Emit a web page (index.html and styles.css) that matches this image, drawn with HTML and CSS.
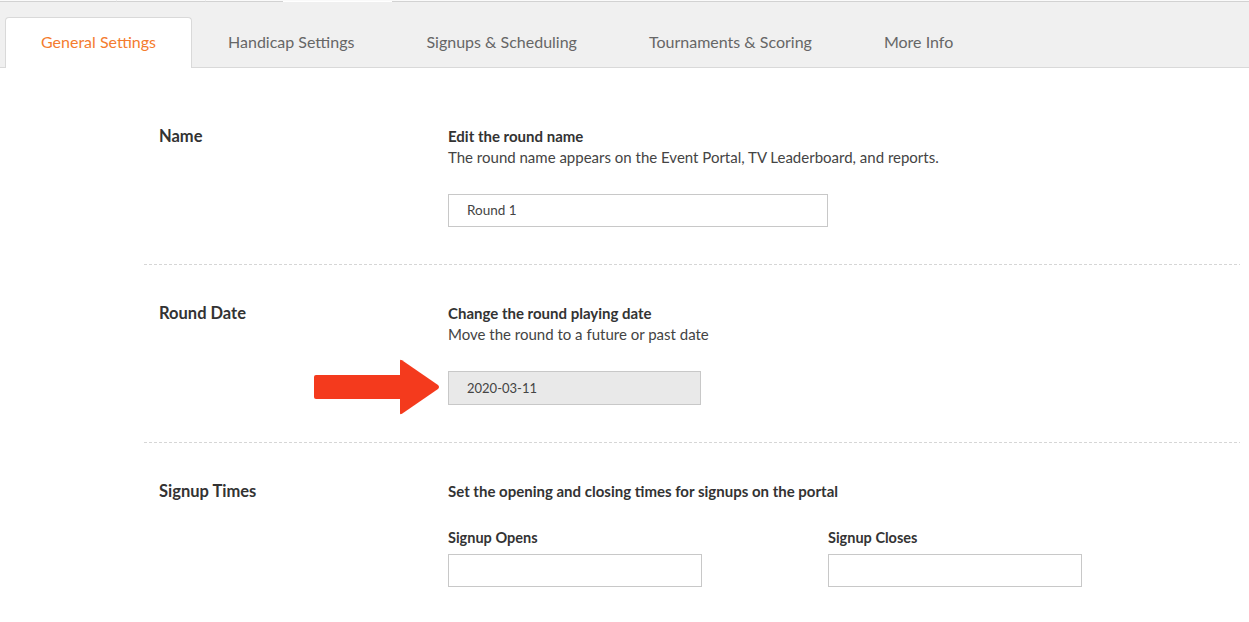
FILE: index.html
```html
<!DOCTYPE html>
<html lang="en">
<head>
<meta charset="utf-8">
<title>Round Settings</title>
<link rel="stylesheet" href="styles.css">
</head>
<body>
<div class="strip">
  <span class="seg s1"></span>
  <span class="seg s2"></span>
  <span class="seg s3"></span>
  <span class="seg s4"></span>
  <span class="seg s5"></span>
</div>
<nav class="tabs">
  <div class="tab active">General Settings</div>
  <div class="tab">Handicap Settings</div>
  <div class="tab">Signups &amp; Scheduling</div>
  <div class="tab">Tournaments &amp; Scoring</div>
  <div class="tab">More Info</div>
</nav>
<main class="settings">
  <section class="row first">
    <div class="label">Name</div>
    <div class="body">
      <div class="title">Edit the round name</div>
      <div class="desc">The round name appears on the Event Portal, TV Leaderboard, and reports.</div>
      <div class="input wide">Round 1</div>
    </div>
  </section>
  <section class="row">
    <div class="label">Round Date</div>
    <div class="body">
      <div class="title">Change the round playing date</div>
      <div class="desc">Move the round to a future or past date</div>
      <div class="field">
        <svg class="arrow" width="130" height="60" viewBox="0 0 130 60" aria-hidden="true">
          <rect x="0" y="16" width="90" height="24" rx="2" fill="#f43a1d"/>
          <path d="M86 2 Q86 0 88 1.2 L124 26 Q126 28 124 30 L88 54.8 Q86 56 86 54 Z" fill="#f43a1d"/>
        </svg>
        <div class="input date">2020-03-11</div>
      </div>
    </div>
  </section>
  <section class="row last">
    <div class="label">Signup Times</div>
    <div class="body">
      <div class="title">Set the opening and closing times for signups on the portal</div>
      <div class="pair">
        <div class="sub">
          <div class="sublabel">Signup Opens</div>
          <div class="input half"></div>
        </div>
        <div class="sub">
          <div class="sublabel">Signup Closes</div>
          <div class="input half"></div>
        </div>
      </div>
    </div>
  </section>
</main>
</body>
</html>
```
FILE: styles.css
```css
* { box-sizing: border-box; }
html, body { margin: 0; padding: 0; }
body {
  background: #fff;
  font-family: Lato, "Open Sans", "Liberation Sans", sans-serif;
  color: #333;
  overflow: hidden;
}

.strip {
  display: flex;
  height: 2px;
  background: #f0f0f0;
}
.seg { height: 2px; border-top: 1px solid #fafafa; border-bottom: 1px solid #d2d2d2; }
.s1 { width: 116px; }
.s2 { width: 89px; border-left: 1px solid #e2e2e2; }
.s3 { width: 78px; border-left: 1px solid #e2e2e2; }
.s4 { width: 109px; border-bottom-color: #ffffff; background: #fff; }
.s5 { flex: 1; }

.tabs {
  display: flex;
  align-items: flex-end;
  padding: 15px 0 0 5px;
  background: #f0f0f0;
  border-bottom: 1px solid #d9d9d9;
}
.tab {
  height: 51px;
  margin-bottom: -1px;
  padding: 0 35px;
  line-height: 48px;
  font-size: 16px;
  color: #666;
  border: 1px solid transparent;
  border-bottom: 0;
  white-space: nowrap;
}
.tab.active {
  background: #fff;
  color: #f47c2e;
  border-color: #d9d9d9;
  border-radius: 4px 4px 0 0;
}

.settings {
  margin: 0 9px 0 144px;
  padding-top: 20px;
}
.row {
  display: grid;
  grid-template-columns: 304px 1fr;
  padding: 38px 0 38px;
  background-image: repeating-linear-gradient(90deg, #d6d6d6 0 3px, transparent 3px 5px);
  background-size: 100% 1px;
  background-repeat: no-repeat;
  background-position: left bottom;
}
.row.last { background: none; }
.label {
  padding-left: 15px;
  font-size: 16.5px;
  line-height: 20px;
  font-weight: 700;
  color: #333;
}
.title {
  font-size: 15px;
  line-height: 20px;
  font-weight: 700;
  color: #333;
}
.desc {
  font-size: 15px;
  line-height: 22px;
  color: #444;
}
.input {
  height: 33px;
  border: 1px solid #c8c8c8;
  background: #fff;
  padding-left: 18px;
  font-size: 13.5px;
  line-height: 31px;
  color: #444;
}
.wide { width: 380px; margin-top: 26px; }
.field { position: relative; margin-top: 26px; }
.date { width: 253px; background: #e9e9e9; height: 34px; line-height: 32px; font-size: 13px; }
.arrow {
  position: absolute;
  left: -134px;
  top: -12px;
}
.pair {
  display: grid;
  grid-template-columns: 380px 254px;
  margin-top: 28px;
}
.sublabel {
  font-size: 14.5px;
  line-height: 18px;
  font-weight: 700;
  color: #333;
}
.half { width: 254px; margin-top: 7px; }
```
